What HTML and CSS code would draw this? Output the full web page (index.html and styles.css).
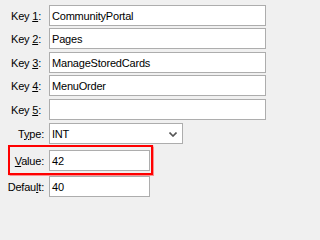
FILE: index.html
```html
<!DOCTYPE html>
<html>
<head>
<meta charset="utf-8">
<link rel="stylesheet" href="styles.css">
</head>
<body>
<div class="form">
  <div class="row r1"><label class="lbl key">Key <u>1</u>:</label><div class="field wide">CommunityPortal</div></div>
  <div class="row r2"><label class="lbl key">Key <u>2</u>:</label><div class="field wide">Pages</div></div>
  <div class="row r3"><label class="lbl key">Key <u>3</u>:</label><div class="field wide">ManageStoredCards</div></div>
  <div class="row r4"><label class="lbl key">Key <u>4</u>:</label><div class="field wide">MenuOrder</div></div>
  <div class="row r5"><label class="lbl key">Key <u>5</u>:</label><div class="field wide"></div></div>
  <div class="row r6"><label class="lbl">T<u>y</u>pe:</label><div class="field combo"><span>INT</span><svg class="chev" width="8" height="5" viewBox="0 0 8 5"><path d="M0.5 0.5 L4 4 L7.5 0.5" fill="none" stroke="#555" stroke-width="1.6"/></svg></div></div>
  <div class="highlight">
    <div class="row inner"><label class="lbl val"><u>V</u>alue:</label><div class="field short">42</div></div>
  </div>
  <div class="row r8"><label class="lbl">Defau<u>l</u>t:</label><div class="field short">40</div></div>
</div>
</body>
</html>
```
FILE: styles.css
```css
html, body {
  margin: 0;
  padding: 0;
  background: #f0f0f0;
}
body {
  width: 271px;
  height: 202px;
  overflow: hidden;
  font-family: "Liberation Sans", Arial, sans-serif;
  font-size: 11px;
  letter-spacing: -0.2px;
  color: #000;
}
.form {
  display: flex;
  flex-direction: column;
  padding-top: 5px;
}
.row {
  display: flex;
  align-items: center;
  height: 21px;
}
.r2 { margin-top: 2px; }
.r3 { margin-top: 3px; }
.r4 { margin-top: 2px; }
.r5 { margin-top: 3px; }
.r6 { margin-top: 3px; }
.r8 { margin-top: 1px; }
.lbl {
  width: 49px;
  box-sizing: border-box;
  text-align: right;
  padding-right: 5px;
  flex: none;
}
.lbl.key { padding-right: 8px; }
.lbl u { text-decoration-thickness: 1px; text-underline-offset: 1px; }
.field {
  box-sizing: border-box;
  height: 21px;
  background: #fff;
  border: 1px solid #adadad;
  padding: 1px 2px 0;
  display: flex;
  align-items: center;
  white-space: nowrap;
  overflow: hidden;
  flex: none;
}
.wide { width: 217px; }
.combo {
  width: 134px;
  justify-content: space-between;
  padding-right: 5px;
}
.chev { flex: none; margin-top: 1px; }
.short { width: 101px; }
.highlight {
  margin-top: 1px;
  margin-left: 8px;
  width: 145px;
  box-sizing: border-box;
  height: 30px;
  border: 2px solid #f00;
  box-shadow: 0 0 1px 0.5px rgba(255, 80, 80, 0.6);
  padding-top: 3px;
}
.row.inner { margin-left: -10px; }
.lbl.val { padding-right: 5px; }
```
